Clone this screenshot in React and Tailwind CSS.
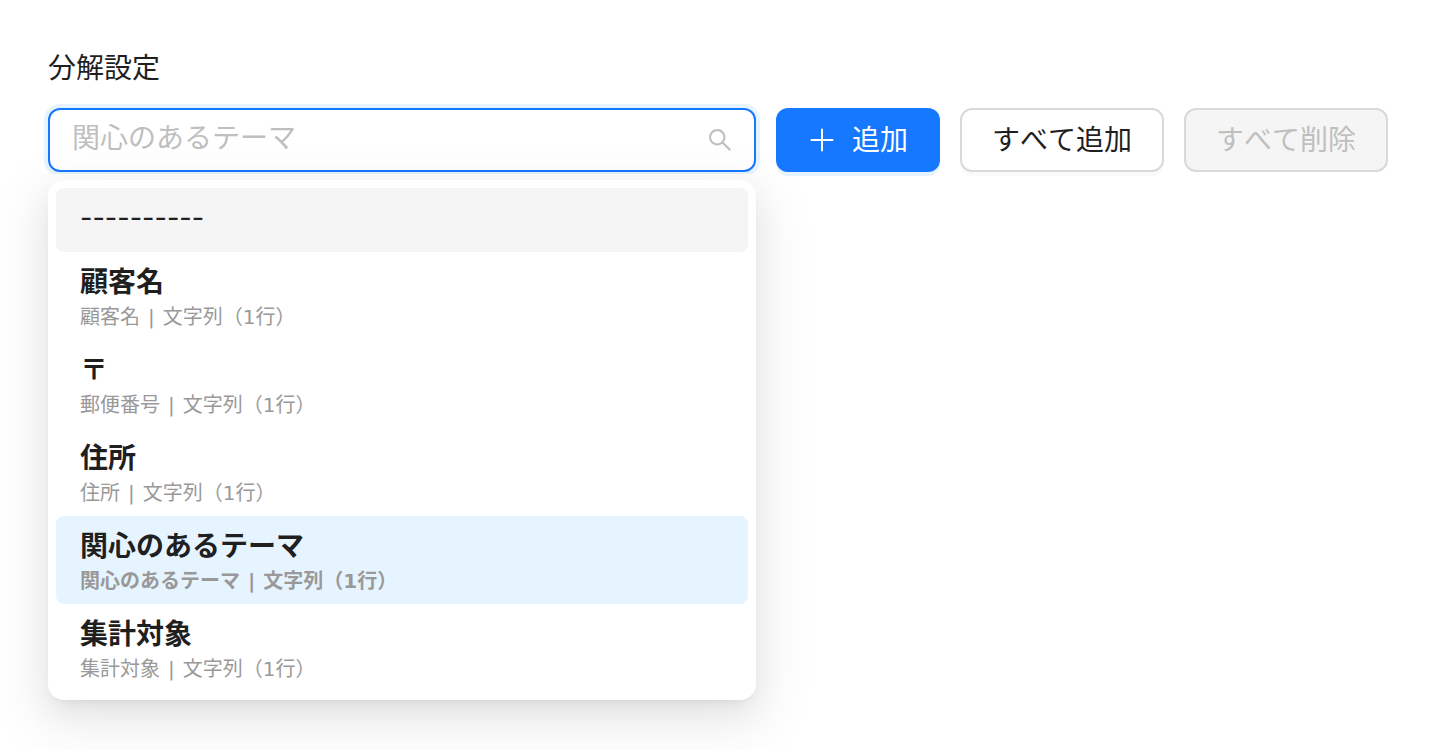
import { useState } from 'react';
import { AiOutlineSearch } from 'react-icons/ai';

const FIELDS = [
  { id: 'customer', label: '顧客名', code: '顧客名', type: '文字列（1行）' },
  { id: 'zip', label: '〒', code: '郵便番号', type: '文字列（1行）' },
  { id: 'address', label: '住所', code: '住所', type: '文字列（1行）' },
  { id: 'theme', label: '関心のあるテーマ', code: '関心のあるテーマ', type: '文字列（1行）' },
  { id: 'target', label: '集計対象', code: '集計対象', type: '文字列（1行）' }
];

const PlusIcon = () => (
  <svg className="w-7 h-7" viewBox="0 0 28 28" fill="none" stroke="currentColor" strokeWidth="2" aria-hidden="true">
    <path d="M14 2.7v22.6M2.7 14h22.6" />
  </svg>
);

const FieldOption = ({ field, selected, onSelect }) => (
  <button
    type="button"
    role="option"
    aria-selected={selected}
    onClick={() => onSelect(field.id)}
    className={`block w-full rounded-lg px-6 pt-[11px] pb-[9px] text-left ${selected ? 'bg-[#e6f4ff]' : 'bg-white'}`}
  >
    <span className="block text-[28px] leading-10 font-bold">{field.label}</span>
    <span className={`block text-xl leading-7 text-[#999999] ${selected ? 'font-bold' : 'font-normal'}`}>
      {field.code}
      <span className="mx-2">|</span>
      {field.type}
    </span>
  </button>
);

const App = () => {
  const [selectedId, setSelectedId] = useState('theme');
  const [keyword, setKeyword] = useState('');

  const selectedField = FIELDS.find((field) => field.id === selectedId);

  return (
    <div className="min-h-screen bg-white px-12 pt-11 text-[28px] leading-[44px] text-[#1f1f1f] [font-kerning:none] font-['DejaVu_Sans','Noto_Sans_CJK_JP',sans-serif]">
      <label htmlFor="field-search" className="block font-['Noto_Sans_CJK_JP',sans-serif]">
        分解設定
      </label>

      <div className="mt-5 flex items-start gap-5 font-['Noto_Sans_CJK_JP',sans-serif]">
        <div className="relative min-w-0 flex-1">
          <div className="[clip-path:inset(-4px_-4px_-2px)]">
            <div className="flex h-16 items-center rounded-xl border-2 border-[#1677ff] bg-white pr-5 pl-[22px] shadow-[0_0_0_4px_rgba(5,145,255,0.1)]">
              <input
                id="field-search"
                type="text"
                role="combobox"
                aria-expanded="true"
                aria-controls="field-list"
                value={keyword}
                onChange={(e) => setKeyword(e.target.value)}
                placeholder={selectedField ? selectedField.label : ''}
                className="min-w-0 flex-1 pb-2 outline-none placeholder:text-[#bfbfbf]"
              />
              <AiOutlineSearch className="h-7 w-7 shrink-0 text-[#bfbfbf]" />
            </div>
          </div>

          <div
            id="field-list"
            role="listbox"
            aria-label="分解設定"
            className="absolute inset-x-0 top-full mt-2 rounded-2xl bg-white p-2 font-['DejaVu_Sans','Noto_Sans_CJK_JP',sans-serif] shadow-[0_12px_32px_0_rgba(0,0,0,0.08),0_6px_12px_-8px_rgba(0,0,0,0.12),0_18px_56px_16px_rgba(0,0,0,0.05)]"
          >
            <button
              type="button"
              role="option"
              aria-selected={selectedId === ''}
              onClick={() => setSelectedId('')}
              className="block h-16 w-full rounded-lg bg-[#f5f5f5] px-6 pb-1 text-left text-[27px] font-['Inter','Noto_Sans_CJK_JP',sans-serif]"
            >
              ----------
            </button>
            {FIELDS.map((field) => (
              <FieldOption
                key={field.id}
                field={field}
                selected={field.id === selectedId}
                onSelect={setSelectedId}
              />
            ))}
          </div>
        </div>

        <button
          type="button"
          className="flex h-16 items-center gap-4 rounded-xl bg-[#1677ff] px-8 text-white shadow-[0_4px_0_rgba(5,145,255,0.1)]"
        >
          <PlusIcon />
          <span className="pb-1">追加</span>
        </button>
        <button
          type="button"
          className="h-16 rounded-xl border-2 border-[#d9d9d9] bg-white px-[30px] pb-1 shadow-[0_4px_0_rgba(0,0,0,0.02)]"
        >
          すべて追加
        </button>
        <button
          type="button"
          disabled
          className="h-16 rounded-xl border-2 border-[#d9d9d9] bg-[#f5f5f5] px-[30px] pb-1 text-[#bfbfbf]"
        >
          すべて削除
        </button>
      </div>
    </div>
  );
};

export default App;
